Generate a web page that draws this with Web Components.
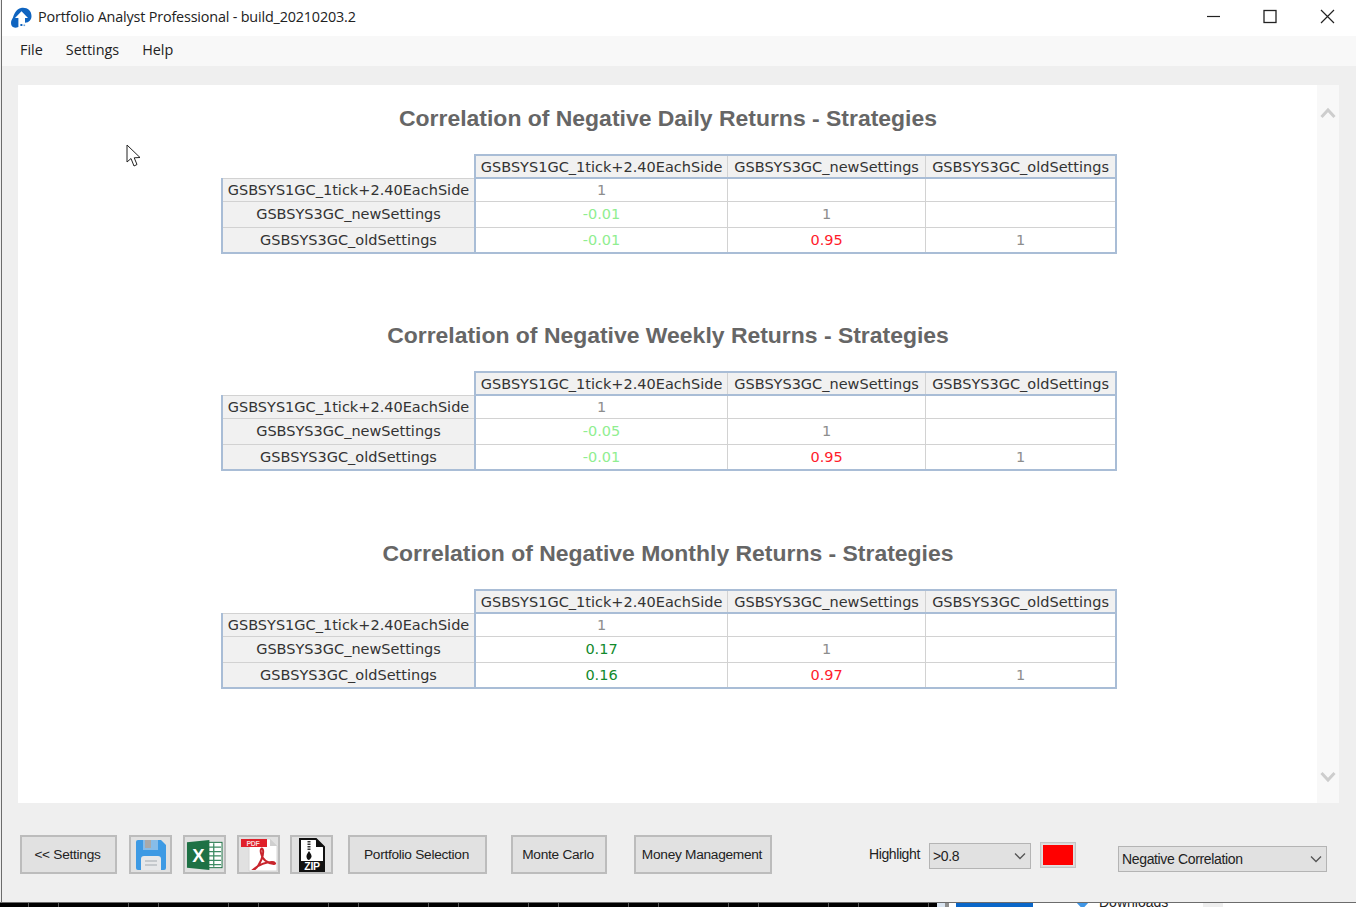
<!DOCTYPE html>
<html>
<head>
<meta charset="utf-8">
<title>Portfolio Analyst Professional</title>
<style>
  html, body { margin: 0; padding: 0; height: 907px; overflow: hidden; background: #000; }
</style>
</head>
<body>
<app-window>
  <title-bar slot="title">Portfolio Analyst Professional - build_20210203.2</title-bar>
  <menu-bar slot="menu">
    <span>File</span>
    <span>Settings</span>
    <span>Help</span>
  </menu-bar>
  <report-pane slot="report">
    <correlation-matrix period="Daily" values="1,,;-0.01,1,;-0.01,0.95,1">Correlation of Negative Daily Returns - Strategies</correlation-matrix>
    <correlation-matrix period="Weekly" values="1,,;-0.05,1,;-0.01,0.95,1">Correlation of Negative Weekly Returns - Strategies</correlation-matrix>
    <correlation-matrix period="Monthly" values="1,,;0.17,1,;0.16,0.97,1">Correlation of Negative Monthly Returns - Strategies</correlation-matrix>
  </report-pane>
  <tool-bar slot="tools"></tool-bar>
  <desktop-strip slot="desktop"></desktop-strip>
</app-window>

<script>
const UI_FONT = '"Liberation Sans", Arial, sans-serif';

// <app-window>
class AppWindow extends HTMLElement {
  constructor() {
    super();
    this.attachShadow({mode: 'open'});
  }

  connectedCallback() {
    this.shadowRoot.innerHTML = `
      <style>
        :host {
          display: flex;
          flex-direction: column;
          position: relative;
          width: 1356px;
          height: 907px;
          overflow: hidden;
          background: #efefef;
        }
        .frame {
          flex: none;
          height: 902px;
          display: flex;
          flex-direction: column;
          border-left: 1px solid #6c6c6c;
          margin-left: 1px;
          box-sizing: border-box;
        }
        .cursor {
          position: absolute;
          left: 126px;
          top: 144px;
        }
      </style>
      <div class="frame">
        <slot name="title"></slot>
        <slot name="menu"></slot>
        <slot name="report"></slot>
        <slot name="tools"></slot>
      </div>
      <slot name="desktop"></slot>
      <svg class="cursor" width="16" height="25" viewBox="0 0 16 25">
        <path d="M1 1 L1 18 L5 14.5 L8 22 L11 20.5 L8.2 13.8 L14 13.5 Z" fill="#fff" stroke="#222" stroke-width="1"/>
      </svg>
    `;
  }
}
customElements.define('app-window', AppWindow);

// <title-bar>
class TitleBar extends HTMLElement {
  constructor() {
    super();
    this.attachShadow({mode: 'open'});
  }

  connectedCallback() {
    this.shadowRoot.innerHTML = `
      <style>
        :host {
          display: flex;
          align-items: center;
          height: 36px;
          flex: none;
          background: #fff;
          color: #222;
          font: 14.4px "Open Sans", ${UI_FONT};
          letter-spacing: -0.18px;
        }
        .logo { margin: 0 6px 1px 8px; flex: none; }
        .caption { flex: 1; padding-bottom: 3px; }
        .controls { display: flex; align-items: center; padding-bottom: 4px; }
        .controls svg { display: block; width: 57px; height: 16px; }
      </style>
      <svg class="logo" width="22" height="22" viewBox="0 0 22 22">
        <path d="M11 1 C17 0 21.5 3.5 21.5 9 C21.5 13 19 15.5 15 15.8 L15 11 L18 11 L11.5 4.2 L5 11 L8.4 11 L8.4 20 C4.5 21.5 1 20.5 1 16 C1 13.5 2 12 3 10.5 C4.5 6 6.5 2 11 1 Z" fill="#0f64c0"/>
        <rect x="10.4" y="17" width="2" height="2" fill="#0f64c0"/>
        <rect x="13.5" y="17.5" width="1.6" height="1.6" fill="#6a9fd8"/>
      </svg>
      <span class="caption"><slot></slot></span>
      <div class="controls">
        <svg viewBox="0 0 57 16"><path d="M22 8.5 H35" stroke="#222" stroke-width="1.2" fill="none"/></svg>
        <svg viewBox="0 0 57 16"><rect x="22" y="2.5" width="12" height="12" stroke="#222" stroke-width="1.3" fill="none"/></svg>
        <svg viewBox="0 0 57 16" style="margin-right:0"><path d="M22 2 L35 15 M35 2 L22 15" stroke="#222" stroke-width="1.2" fill="none"/></svg>
      </div>
    `;
  }
}
customElements.define('title-bar', TitleBar);

// <menu-bar>
class MenuBar extends HTMLElement {
  constructor() {
    super();
    this.attachShadow({mode: 'open'});
  }

  connectedCallback() {
    this.shadowRoot.innerHTML = `
      <style>
        :host {
          display: block;
          flex: none;
          height: 30px;
          background: #f8f8f8;
        }
        .items {
          display: flex;
          align-items: center;
          gap: 23px;
          height: 26px;
          padding-left: 18px;
          color: #222;
          font: 14.4px "Open Sans", ${UI_FONT};
        }
      </style>
      <div class="items"><slot></slot></div>
    `;
  }
}
customElements.define('menu-bar', MenuBar);

// <report-pane>
class ReportPane extends HTMLElement {
  constructor() {
    super();
    this.attachShadow({mode: 'open'});
  }

  connectedCallback() {
    this.shadowRoot.innerHTML = `
      <style>
        :host {
          display: flex;
          flex: none;
          height: 718px;
          margin: 19px 17px 0 16px;
          background: #fff;
        }
        .body {
          flex: 1;
          padding: 20px 0 0 1px;
          display: flex;
          flex-direction: column;
          align-items: center;
          box-sizing: border-box;
        }
        .scroll {
          width: 22px;
          background: #f8f8f8;
          display: flex;
          flex-direction: column;
          justify-content: space-between;
          align-items: center;
          padding: 22px 0 20px;
          box-sizing: border-box;
        }
        .scroll svg { display: block; }
      </style>
      <div class="body"><slot></slot></div>
      <div class="scroll">
        <svg width="16" height="12" viewBox="0 0 16 12"><path d="M1.5 10 L8 3 L14.5 10" fill="none" stroke="#cdcdcd" stroke-width="3"/></svg>
        <svg width="16" height="12" viewBox="0 0 16 12"><path d="M1.5 2 L8 9 L14.5 2" fill="none" stroke="#cdcdcd" stroke-width="3"/></svg>
      </div>
    `;
  }
}
customElements.define('report-pane', ReportPane);

// <correlation-matrix>
class CorrelationMatrix extends HTMLElement {
  constructor() {
    super();
    this.attachShadow({mode: 'open'});
  }

  static get observedAttributes() {
    return ['values'];
  }

  attributeChangedCallback() {
    this.render();
  }

  connectedCallback() {
    this.render();
  }

  tone(value) {
    const num = parseFloat(value);
    if(num === 1) return 'unit';
    if(num >= 0.8) return 'high';
    if(num >= 0.1) return 'mid';
    return 'low';
  }

  render() {
    const names = ['GSBSYS1GC_1tick+2.40EachSide', 'GSBSYS3GC_newSettings', 'GSBSYS3GC_oldSettings'];
    const rows = (this.getAttribute('values') || '').split(';').map(r => r.split(','));

    this.shadowRoot.innerHTML = `
      <style>
        :host {
          display: block;
          width: 894px;
          margin-bottom: 68px;
        }
        :host(:nth-child(2)) { margin-bottom: 69px; }
        h2 {
          margin: 0 0 23px;
          height: 26px;
          text-align: center;
          white-space: nowrap;
          font: bold 22.95px/26px "Liberation Sans", Arial, sans-serif;
          color: #666;
        }
        table {
          border-collapse: collapse;
          table-layout: fixed;
          width: 894px;
          font: 14.5px "DejaVu Sans", Verdana, sans-serif;
          color: #333;
        }
        th, td {
          padding: 0;
          text-align: center;
          white-space: nowrap;
          font-weight: normal;
          border: 1px solid #d2d2d2;
        }
        thead th { height: 21px; background: #f1f1f1; border-top: 2px solid #a9bdd6; border-bottom: 2px solid #a9bdd6; }
        thead th:first-child { background: #fff; border: 0; border-right: 2px solid #a9bdd6; }
        thead th:last-child, td:last-child { border-right: 2px solid #a9bdd6; }
        tbody th { background: #f1f1f1; border-left: 2px solid #a9bdd6; border-right: 2px solid #a9bdd6; }
        tbody tr { height: 26px; }
        tbody tr:first-child { height: 23px; }
        tbody tr:last-child th, tbody tr:last-child td { border-bottom: 2px solid #a9bdd6; }
        .unit { color: #8d8d8d; }
        .low { color: #90ee90; }
        .mid { color: #128a2c; }
        .high { color: #ff1c2c; }
      </style>
      <h2><slot></slot></h2>
      <table>
        <colgroup><col style="width:253px"><col style="width:252.6px"><col style="width:198px"><col style="width:190.4px"></colgroup>
        <thead>
          <tr><th></th>${names.map(n => `<th>${n}</th>`).join('')}</tr>
        </thead>
        <tbody>
          ${rows.map((row, i) => `<tr><th>${names[i]}</th>${row.map(v => `<td class="${v ? this.tone(v) : ''}">${v}</td>`).join('')}</tr>`).join('')}
        </tbody>
      </table>
    `;
  }
}
customElements.define('correlation-matrix', CorrelationMatrix);

// <form-button>
class FormButton extends HTMLElement {
  constructor() {
    super();
    this.attachShadow({mode: 'open'});
  }

  connectedCallback() {
    this.shadowRoot.innerHTML = `
      <style>
        :host {
          display: flex;
          align-items: center;
          justify-content: center;
          box-sizing: border-box;
          height: 39px;
          flex: none;
          background: #e1e1e1;
          border: 2px solid #bcbcbc;
          color: #222;
          font: 13.7px "Liberation Sans", Arial, sans-serif;
          letter-spacing: -0.28px;
          white-space: nowrap;
        }
        ::slotted(svg) { display: block; }
      </style>
      <slot></slot>
    `;
  }
}
customElements.define('form-button', FormButton);

// <combo-box>
class ComboBox extends HTMLElement {
  constructor() {
    super();
    this.attachShadow({mode: 'open'});
  }

  connectedCallback() {
    this.shadowRoot.innerHTML = `
      <style>
        :host {
          display: flex;
          align-items: center;
          box-sizing: border-box;
          height: 26px;
          flex: none;
          padding: 0 4px 0 3px;
          background: #e1e1e1;
          border: 1px solid #b4b4b4;
          color: #222;
          font: 14px "Liberation Sans", Arial, sans-serif;
          letter-spacing: -0.35px;
        }
        span { flex: 1; }
      </style>
      <span><slot></slot></span>
      <svg width="12" height="8" viewBox="0 0 12 8"><path d="M1 1.5 L6 6.5 L11 1.5" fill="none" stroke="#555" stroke-width="1.3"/></svg>
    `;
  }
}
customElements.define('combo-box', ComboBox);

// <tool-bar>
class ToolBar extends HTMLElement {
  constructor() {
    super();
    this.attachShadow({mode: 'open'});
  }

  connectedCallback() {
    this.shadowRoot.innerHTML = `
      <style>
        :host {
          display: flex;
          align-items: flex-start;
          flex: 1;
          padding: 32px 0 0 18px;
          background: #efefef;
        }
        .label { font: 14px "Liberation Sans", Arial, sans-serif; letter-spacing: -0.4px; color: #222; }
        .swatch {
          flex: none;
          box-sizing: border-box;
          width: 36px;
          height: 26px;
          margin: 7px 0 0 9px;
          border: 2px solid #d8d8d8;
          outline: 1px solid #c4c4c4;
          outline-offset: -1px;
          padding: 1px;
          background: #e1e1e1;
        }
        .swatch div { height: 100%; background: #f00; }
      </style>
      <form-button style="width:97px;padding-right:2px">&lt;&lt; Settings</form-button>
      <form-button style="width:43px;margin-left:12px">
        <svg width="32" height="32" viewBox="0 0 32 32">
          <path d="M1 3 Q1 1 3 1 H26 L31 6 V29 Q31 31 29 31 H3 Q1 31 1 29 Z" fill="#3d9ae4"/>
          <rect x="8" y="1" width="15" height="10" fill="#87bce8"/>
          <rect x="10" y="1" width="6" height="8" fill="#a9a9a9"/>
          <path d="M6 31 V20 Q6 17 9 17 H23 Q26 17 26 20 V31 Z" fill="#e6e8ea"/>
          <path d="M10 22 H22 M10 26 H22" stroke="#b9bec4" stroke-width="1.4"/>
        </svg>
      </form-button>
      <form-button style="width:43px;margin-left:11px">
        <svg width="37" height="32" viewBox="0 0 38 32">
          <rect x="20" y="3" width="17" height="26" fill="#fff" stroke="#1e7145" stroke-width="1"/>
          <path d="M22 8 H36 M22 12.5 H36 M22 17 H36 M22 21.5 H36 M22 26 H36 M28.5 4 V28" stroke="#3d8b63" stroke-width="1.3"/>
          <path d="M1 3 L24 0.5 V31.5 L1 29 Z" fill="#1e7145"/>
          <text x="12.5" y="23" font-family="Liberation Sans, sans-serif" font-weight="bold" font-size="19" text-anchor="middle" fill="#fff">X</text>
        </svg>
      </form-button>
      <form-button style="width:43px;margin-left:11px">
        <svg width="38" height="34" viewBox="0 0 38 34">
          <path d="M9 1 H30 L37 8 V33 H9 Z" fill="#fff" stroke="#d6d6d6"/>
          <path d="M30 1 V8 H37 Z" fill="#cfcfcf"/>
          <rect x="1" y="1" width="26" height="8" fill="#e0202a"/>
          <text x="13" y="8" font-family="Liberation Sans, sans-serif" font-weight="bold" font-size="7" text-anchor="middle" fill="#f6d8d8">PDF</text>
          <path d="M15 31 C20 27 24 17 23 12 C22 9 20 11 21 15 C22 21 27 25 34 26 C36 26 35 24 32 24 C27 24 20 26 14 31 Z" fill="none" stroke="#c8242c" stroke-width="2"/>
        </svg>
      </form-button>
      <form-button style="width:43px;margin-left:10px">
        <svg width="26" height="34" viewBox="0 0 26 34">
          <path d="M2 1 H17 L25 9 V33 H1 V1 Z" fill="#fff" stroke="#111" stroke-width="2"/>
          <path d="M17 1 V9 H25 Z" fill="#111"/>
          <path d="M10 3 V12" stroke="#333" stroke-width="3" stroke-dasharray="1.5 1"/>
          <path d="M10 13 Q13 17 12.5 19 Q11 22 10 22 Q8 22 7.5 19 Q7 17 10 13 Z" fill="#111"/>
          <rect x="1" y="23" width="24" height="10" fill="#111"/>
          <text x="13" y="32" font-family="Liberation Sans, sans-serif" font-weight="bold" font-size="10.5" text-anchor="middle" fill="#fff">ZIP</text>
        </svg>
      </form-button>
      <form-button style="width:139px;margin-left:15px;padding-right:2px">Portfolio Selection</form-button>
      <form-button style="width:96px;margin-left:24px;padding-right:2px">Monte Carlo</form-button>
      <form-button style="width:138px;margin-left:27px;padding-right:2px">Money Management</form-button>
      <span class="label" style="margin:11px 0 0 97px;width:60px">Highlight</span>
      <combo-box style="width:102px;margin-top:8px">&gt;0.8</combo-box>
      <div class="swatch"><div></div></div>
      <combo-box style="width:209px;margin:11px 0 0 42px">Negative Correlation</combo-box>
    `;
  }
}
customElements.define('tool-bar', ToolBar);

// <desktop-strip>
class DesktopStrip extends HTMLElement {
  constructor() {
    super();
    this.attachShadow({mode: 'open'});
  }

  connectedCallback() {
    this.shadowRoot.innerHTML = `
      <style>
        :host {
          display: flex;
          flex: 1;
          overflow: hidden;
          border-top: 1px solid #6c6c6c;
        }
        .ticks {
          width: 937px;
          flex: none;
          background-color: #000;
          background-image:
            repeating-linear-gradient(90deg, transparent 0 28px, #555 28px 29px, transparent 29px 58px, #555 58px 59px, transparent 59px 100px);
        }
        .gap { width: 8px; background: #d9e4f0; flex: none; }
        .edge { width: 4px; background: #8e8e8e; flex: none; }
        .files {
          flex: 1;
          display: flex;
          background: #fff;
          padding-left: 7px;
          align-items: flex-start;
        }
        .thumb { width: 77px; height: 6px; background: #0a66c8; flex: none; }
        .chev { margin: -2px 0 0 42px; flex: none; }
        .name {
          margin: -9px 0 0 9px;
          font: 14px "Liberation Sans", Arial, sans-serif;
          color: #222;
        }
        .tag { margin-left: 35px; width: 20px; height: 5px; background: #eee; flex: none; }
      </style>
      <div class="ticks"></div>
      <div class="gap"></div>
      <div class="edge"></div>
      <div class="files">
        <div class="thumb"></div>
        <svg class="chev" width="15" height="8" viewBox="0 0 15 8"><path d="M0 0 H15 L7.5 8 Z" fill="#3f96e6"/></svg>
        <span class="name">Downloads</span>
        <div class="tag"></div>
      </div>
    `;
  }
}
customElements.define('desktop-strip', DesktopStrip);
</script>
</body>
</html>
